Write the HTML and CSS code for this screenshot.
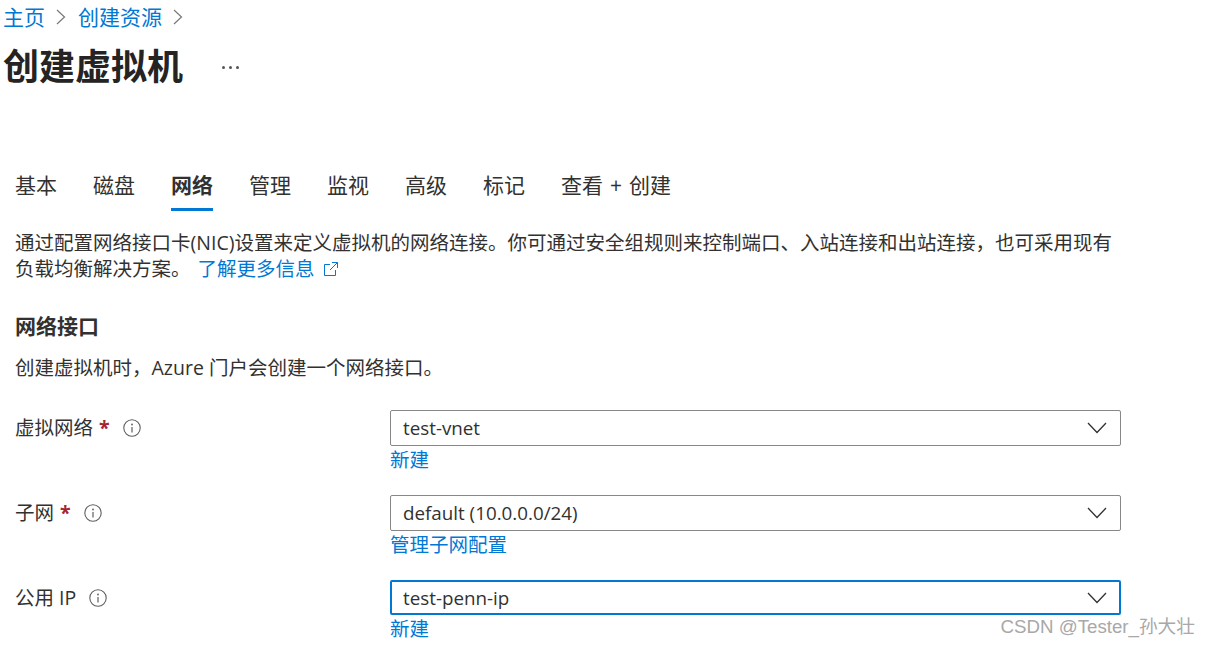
FILE: index.html
```html
<!DOCTYPE html>
<html lang="zh-CN">
<head>
    <meta charset="UTF-8">
    <title>创建虚拟机</title>
    <link rel="stylesheet" href="styles.css">
</head>
<body>
    <nav class="breadcrumb">
        <a href="#">主页</a>
        <svg class="crumb-sep" width="10" height="16" viewBox="0 0 10 16"><path d="M1 1l7.5 7L1 15" fill="none" stroke="#777" stroke-width="1.2"/></svg>
        <a href="#">创建资源</a>
        <svg class="crumb-sep" width="10" height="16" viewBox="0 0 10 16"><path d="M1 1l7.5 7L1 15" fill="none" stroke="#777" stroke-width="1.2"/></svg>
    </nav>
    <div class="title-row">
        <h1>创建虚拟机</h1>
        <span class="more">
            <i></i><i></i><i></i>
        </span>
    </div>

    <div class="content">
        <div class="tabs">
            <a href="#" class="tab">基本</a>
            <a href="#" class="tab">磁盘</a>
            <a href="#" class="tab active">网络</a>
            <a href="#" class="tab">管理</a>
            <a href="#" class="tab">监视</a>
            <a href="#" class="tab">高级</a>
            <a href="#" class="tab">标记</a>
            <a href="#" class="tab last">查看 + 创建</a>
        </div>

        <p class="intro">通过配置网络接口卡(NIC)设置来定义虚拟机的网络连接。你可通过安全组规则来控制端口、入站连接和出站连接，也可采用现有负载均衡解决方案。 <a href="#" class="learn"><span>了解更多信息</span><svg class="ext" width="16" height="16" viewBox="0 0 16 16"><path d="M7 3.5H1.5v11h11V9M9 1.5h5.5V7M14.5 1.5L7 9" fill="none" stroke="#0078d4" stroke-width="1"/></svg></a></p>

        <h2>网络接口</h2>
        <p class="sub">创建虚拟机时，Azure 门户会创建一个网络接口。</p>

        <div class="field">
            <label><span>虚拟网络</span><span class="req">*</span>
                <svg class="info" width="18" height="18" viewBox="0 0 18 18"><circle cx="9" cy="9" r="8.2" fill="none" stroke="#605e5c" stroke-width="1.1"/><path d="M9 8v5.5" stroke="#605e5c" stroke-width="1.2"/><circle cx="9" cy="5.5" r="0.9" fill="#605e5c"/></svg>
            </label>
            <div class="control">
                <div class="select">
                    <span>test-vnet</span>
                    <svg class="chev" width="20" height="12" viewBox="0 0 20 12"><path d="M1 1l9 9.5L19 1" fill="none" stroke="#323130" stroke-width="1.3"/></svg>
                </div>
                <a href="#" class="under-link">新建</a>
            </div>
        </div>

        <div class="field">
            <label><span>子网</span><span class="req">*</span>
                <svg class="info" width="18" height="18" viewBox="0 0 18 18"><circle cx="9" cy="9" r="8.2" fill="none" stroke="#605e5c" stroke-width="1.1"/><path d="M9 8v5.5" stroke="#605e5c" stroke-width="1.2"/><circle cx="9" cy="5.5" r="0.9" fill="#605e5c"/></svg>
            </label>
            <div class="control">
                <div class="select">
                    <span>default (10.0.0.0/24)</span>
                    <svg class="chev" width="20" height="12" viewBox="0 0 20 12"><path d="M1 1l9 9.5L19 1" fill="none" stroke="#323130" stroke-width="1.3"/></svg>
                </div>
                <a href="#" class="under-link">管理子网配置</a>
            </div>
        </div>

        <div class="field">
            <label><span>公用 IP</span>
                <svg class="info" width="18" height="18" viewBox="0 0 18 18"><circle cx="9" cy="9" r="8.2" fill="none" stroke="#605e5c" stroke-width="1.1"/><path d="M9 8v5.5" stroke="#605e5c" stroke-width="1.2"/><circle cx="9" cy="5.5" r="0.9" fill="#605e5c"/></svg>
            </label>
            <div class="control">
                <div class="select focused">
                    <span>test-penn-ip</span>
                    <svg class="chev" width="20" height="12" viewBox="0 0 20 12"><path d="M1 1l9 9.5L19 1" fill="none" stroke="#323130" stroke-width="1.3"/></svg>
                </div>
                <a href="#" class="under-link">新建</a>
            </div>
        </div>
    </div>

    <div class="watermark">CSDN @Tester_孙大壮</div>
</body>
</html>
```

FILE: styles.css
```css
html, body {
    height: 646px;
    overflow: hidden;
}
body {
    margin: 0;
    position: relative;
    background: #fff;
    color: #323130;
    font-family: "Open Sans", "Noto Sans CJK SC", sans-serif;
    font-size: 19.5px;
    line-height: 26px;
}
a {
    color: #0078d4;
    text-decoration: none;
}
.breadcrumb {
    display: flex;
    align-items: center;
    height: 34px;
    padding-left: 3px;
    font-size: 21px;
}
.crumb-sep {
    margin: 0 12px 0 11px;
}
.title-row {
    display: flex;
    align-items: center;
    height: 66px;
    padding-left: 3px;
}
h1 {
    margin: 0;
    font-size: 36px;
    line-height: 50px;
    color: #252423;
    font-weight: 700;
}
.more {
    display: flex;
    gap: 4px;
    margin-left: 39px;
}
.more i {
    width: 3px;
    height: 3px;
    border-radius: 50%;
    background: #555;
}
.content {
    padding: 70px 0 0 15px;
}
.tabs {
    display: flex;
    gap: 36px;
    height: 41px;
    font-size: 21px;
    line-height: 30px;
}
.tab {
    color: #323130;
    height: 41px;
    box-sizing: border-box;
}
.tab.last {
    word-spacing: 1.5px;
}
.tab.active {
    font-weight: 700;
    border-bottom: 3px solid #0078d4;
}
.intro {
    margin: 19px 0 0;
    width: 1105px;
}
.learn {
    margin-left: 2px;
}
.ext {
    margin-left: 8px;
    vertical-align: -1px;
}
h2 {
    margin: 29px 0 0;
    font-size: 21px;
    line-height: 30px;
    font-weight: 700;
}
.sub {
    margin: 13px 0 0;
    line-height: 28px;
}
.field {
    display: grid;
    grid-template-columns: 375px 731px;
    height: 85px;
}
.sub + .field {
    margin-top: 28px;
}
.field label {
    display: flex;
    align-items: center;
    height: 36px;
}
.req {
    color: #a4262c;
    margin-left: 6px;
    font-weight: 700;
}
.info {
    margin-left: 13px;
}
.select {
    box-sizing: border-box;
    display: flex;
    align-items: center;
    justify-content: space-between;
    height: 36px;
    padding: 0 13px 0 12px;
    border: 1px solid #8a8886;
    border-radius: 2px;
    font-size: 18.8px;
}
.select.focused {
    height: 35px;
    border: 2px solid #0078d4;
    padding: 0 12px 0 11px;
}
.under-link {
    display: block;
    line-height: 27px;
}
.watermark {
    position: absolute;
    right: 15px;
    bottom: 6px;
    color: #a8a8a8;
    font-family: "Liberation Sans", "Noto Sans CJK SC", sans-serif;
    font-size: 18.7px;
    line-height: 26px;
}
```
